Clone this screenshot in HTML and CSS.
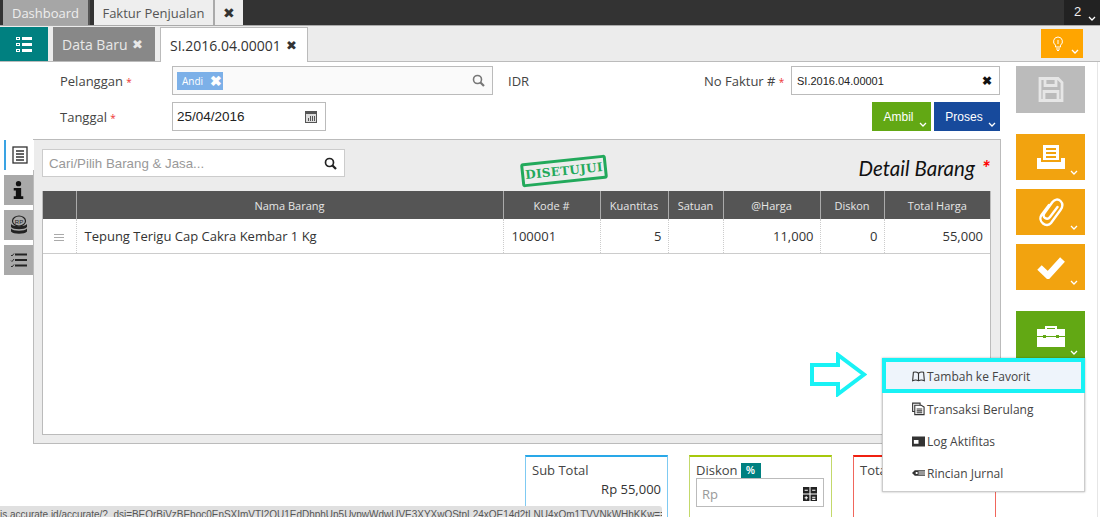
FILE: index.html
```html
<!DOCTYPE html>
<html lang="id">
<head>
<meta charset="utf-8">
<title>Faktur Penjualan</title>
<link rel="stylesheet" href="styles.css">
</head>
<body>
<div class="page">
  <header class="topbar">
    <div class="wintab wintab-off">Dashboard</div>
    <div class="wintab wintab-on">Faktur Penjualan</div>
    <div class="wintab wintab-close">✖</div>
    <div class="counter">2<svg class="chev" viewBox="0 0 8 5"><path d="M1 1l3 3 3-3"/></svg></div>
  </header>
  <nav class="subbar">
    <div class="menu-btn">
      <svg width="16" height="15" viewBox="0 0 16 15" fill="#fff"><path d="M0 0h4v3H0zM6 0h10v3H6zM0 6h4v3H0zM6 6h10v3H6zM0 12h4v3H0zM6 12h10v3H6z"/><path fill="#008080" d="M1 1h2v1H1zM1 7h2v1H1zM1 13h2v1H1z"/></svg>
    </div>
    <div class="doc-tab doc-tab-off">Data Baru <span class="x">✖</span></div>
    <div class="doc-tab doc-tab-on">SI.2016.04.00001 <span class="x">✖</span></div>
    <div class="lamp">
      <svg width="12" height="15" viewBox="0 0 12 15" fill="none" stroke="#fff" stroke-width="1"><path d="M6 1a4.500 4.500 0 0 0-2.500 8.200V11h5V9.200A4.500 4.500 0 0 0 6 1zM4 13h4M5 14.500h2M6 4v4"/></svg>
      <svg class="chev" viewBox="0 0 8 5"><path d="M1 1l3 3 3-3"/></svg>
    </div>
  </nav>
  <div class="workspace">
    <main class="main">
      <section class="form">
        <div class="form-row">
          <label class="lbl">Pelanggan <i>*</i></label>
          <div class="field field-cust">
            <span class="chip">Andi <b>✖</b></span>
            <svg class="search" width="13" height="13" viewBox="0 0 13 13" fill="none" stroke="#777" stroke-width="1.600"><circle cx="5.500" cy="5.500" r="4"/><path d="M8.500 8.500l3.500 3.500" stroke-width="2.200"/></svg>
          </div>
          <span class="cur">IDR</span>
          <label class="lbl-no">No Faktur # <i>*</i></label>
          <div class="field field-no"><span>SI.2016.04.00001</span><b class="clear">✖</b></div>
        </div>
        <div class="form-row form-row-2">
          <label class="lbl">Tanggal <i>*</i></label>
          <div class="field field-date"><span>25/04/2016</span>
            <svg width="12" height="13" viewBox="0 0 12 13"><path fill="#555" d="M0 1h12v12H0z"/><path fill="#ddd" d="M1 4h10v8H1z"/><path fill="#555" d="M5 6h1v5H5zM7 6h1v5H7zM9 6h1v5H9zM3 8h1v3H3z"/></svg>
          </div>
          <div class="actions">
            <div class="act act-green">Ambil<svg class="chev" viewBox="0 0 8 5"><path d="M1 1l3 3 3-3"/></svg></div>
            <div class="act act-blue">Proses<svg class="chev" viewBox="0 0 8 5"><path d="M1 1l3 3 3-3"/></svg></div>
          </div>
        </div>
      </section>
      <section class="detail">
        <div class="side-tabs">
          <div class="side-tab side-tab-on">
            <svg width="16" height="18" viewBox="0 0 16 18" fill="none" stroke="#333" stroke-width="1.300"><rect x="1" y="1" width="14" height="16"/><path d="M4 5h8M4 8h8M4 11h8M4 14h8"/></svg>
          </div>
          <div class="side-tab">
            <svg width="11" height="18" viewBox="0 0 10 17" fill="#111"><circle cx="5" cy="2.500" r="2.500"/><path d="M.5 6.500h7v8h2V17H.5v-2.500h2v-5.500h-2z"/></svg>
          </div>
          <div class="side-tab">
            <svg width="18" height="20" viewBox="0 0 18 20"><ellipse cx="9" cy="6" rx="6.500" ry="5" fill="none" stroke="#222" stroke-width="1.200"/><text x="4.800" y="8.500" class="rp">RP</text><path d="M1 9c2 3 14 3 16 0v3c-2 3-14 3-16 0zM1 13.500c2 3 14 3 16 0v3c-2 3-14 3-16 0z" fill="#222"/></svg>
          </div>
          <div class="side-tab">
            <svg width="17" height="14" viewBox="0 0 17 14" fill="none" stroke="#222"><path d="M5 1.500h12M5 7h12M5 12.500h12" stroke-width="2"/><path d="M1 2l1 1 2-2.500M1 7.500l1 1 2-2.500M1 13l1 1 2-2.500" stroke-width=".9"/></svg>
          </div>
        </div>
        <div class="panel">
          <div class="panel-head">
            <div class="item-search"><span>Cari/Pilih Barang &amp; Jasa...</span>
              <svg width="13" height="13" viewBox="0 0 13 13" fill="none" stroke="#222" stroke-width="1.700"><circle cx="5.500" cy="5.500" r="4"/><path d="M8.500 8.500l3.500 3.500" stroke-width="2.300"/></svg>
            </div>
            <div class="stamp">DISETUJUI</div>
            <h2 class="detail-title">Detail Barang <i>*</i></h2>
          </div>
          <div class="table-wrap">
            <table class="items">
              <thead>
                <tr><th class="c0"></th><th class="c1">Nama Barang</th><th class="c2">Kode #</th><th class="c3">Kuantitas</th><th class="c4">Satuan</th><th class="c5">@Harga</th><th class="c6">Diskon</th><th class="c7">Total Harga</th></tr>
              </thead>
              <tbody>
                <tr>
                  <td class="grip"><svg width="10" height="7" viewBox="0 0 10 7" fill="#aaa"><path d="M0 0h10v1H0zM0 3h10v1H0zM0 6h10v1H0z"/></svg></td>
                  <td class="name">Tepung Terigu Cap Cakra Kembar 1 Kg</td><td class="name">100001</td><td class="num">5</td><td></td><td class="num">11,000</td><td class="num">0</td><td class="num">55,000</td>
                </tr>
              </tbody>
            </table>
          </div>
        </div>
      </section>
      <section class="totals">
        <div class="tot tot-blue"><div class="tot-t">Sub Total</div><div class="tot-v">Rp 55,000</div></div>
        <div class="tot tot-green"><div class="tot-t">Diskon <span class="pct">%</span></div>
          <div class="disc-in"><span>Rp</span>
            <svg width="14" height="14" viewBox="0 0 13 13" fill="#222"><path d="M0 0h6v6H0zM7 0h6v6H7zM0 7h6v6H0zM7 7h6v6H7z"/><path fill="#fff" d="M1.500 2.500h3v1h-3zM8.500 2.500h3v1h-3zM8.500 9h3v1h-3zM8.500 11h3v1h-3zM2.500 8.500h1v1h1v1h-1v1h-1v-1h-1v-1h1z"/></svg>
          </div>
        </div>
        <div class="tot tot-red"><div class="tot-t">Total</div></div>
      </section>
    </main>
    <aside class="rail">
      <div class="rb rb-save">
        <svg width="26" height="27" viewBox="0 0 26 26" fill="none" stroke="#e6e6e6" stroke-width="2.800"><path d="M2 2h18l4 4v18H2z"/><path d="M7 2v7h11V2M6 24v-9h14v9"/></svg>
      </div>
      <div class="rb rb-print">
        <svg width="28" height="25" viewBox="0 0 28 25" fill="#fff"><path fill-rule="evenodd" d="M6 0h16v15H6zM9 3v2h10V3zM9 7v2h10V7zM9 11v2h10v-2z"/><path d="M0 13h4v4h20v-4h4v11H0z"/></svg>
        <svg class="chev" viewBox="0 0 8 5"><path d="M1 1l3 3 3-3"/></svg>
      </div>
      <div class="rb rb-clip">
        <svg width="26" height="29" viewBox="0 0 26 29" fill="none" stroke="#fff" stroke-width="2.400" stroke-linecap="round"><path d="M11 7L3.500 17c-2 3-1 6.500 1.500 8.500s6 2 8-.5L22.500 12c2.500-3.500 2.500-6.500 0-9s-6-1.500-8 1L6.500 15c-1.500 2-1 4 .5 5s3.500 1 5-1l7.500-10"/></svg>
        <svg class="chev" viewBox="0 0 8 5"><path d="M1 1l3 3 3-3"/></svg>
      </div>
      <div class="rb rb-check">
        <svg width="28" height="23" viewBox="0 0 28 23" fill="none" stroke="#fff" stroke-width="6.500"><path d="M2.500 11.500l8.500 8L25.500 3.500"/></svg>
        <svg class="chev" viewBox="0 0 8 5"><path d="M1 1l3 3 3-3"/></svg>
      </div>
      <div class="rb rb-tools">
        <svg width="28" height="22" viewBox="0 0 28 22"><path fill="none" stroke="#fff" stroke-width="2" d="M9 5V2h10v3"/><path fill="#fff" d="M0 4h28v18H0z"/><path fill="#62a814" d="M0 11h28v1H0zM6 10h3v3H6zM19 10h3v3h-3z"/></svg>
        <svg class="chev" viewBox="0 0 8 5"><path d="M1 1l3 3 3-3"/></svg>
      </div>
    </aside>
  </div>
  <svg class="arrow" width="57" height="45" viewBox="0 0 57 45" fill="#fff" stroke="#19f2f5" stroke-width="4"><path d="M2 13h26V3l26 19.500L28 42V32H2z"/></svg>
  <ul class="dropdown">
    <li class="dd dd-on"><svg width="13" height="11" viewBox="0 0 14 11" fill="none" stroke="#333" stroke-width="1.200"><path d="M7 2C5 .5 3 .5 1.500 1L.7 10C3 9 5 9 7 10c2-1 4-1 6.300 0L12.500 1C11 .5 9 .5 7 2zv8"/></svg>Tambah ke Favorit</li>
    <li class="dd"><svg width="13" height="14" viewBox="0 0 14 14" fill="none" stroke="#333" stroke-width="1.200"><path d="M.7.700h8v9h-8z"/><path fill="#fff" d="M3 3h7l3 2v8H3z"/><path d="M5 7h6M5 9h6M5 11h6"/></svg>Transaksi Berulang</li>
    <li class="dd"><svg width="13" height="11" viewBox="0 0 14 11" fill="#333"><path fill-rule="evenodd" d="M0 0h14v11H0zM2 4v4h5V4z"/></svg>Log Aktifitas</li>
    <li class="dd"><svg width="13" height="8" viewBox="0 0 14 8" fill="#333"><path fill-rule="evenodd" d="M3 1h11v6H3L0 4zM4 3v2h2V3z"/><path fill="#fff" d="M7 2.500h7v1H7zM7 4.500h7v1H7z"/></svg>Rincian Jurnal</li>
  </ul>
  <div class="status">is.accurate.id/accurate/?_dsi=BEQrBiVzBEboc0EnSXImVTI2QU1EdDhphUp5UvpwWdwUVE3XYXwOStpL24xOE14d2tLNU4xOm1TVVNkWHhKKw==#</div>
</div>
</body>
</html>
```
FILE: styles.css
```css
* { box-sizing: border-box; }
html, body { margin: 0; padding: 0; height: 100%; overflow: hidden; background: #fff; }
body { font-family: "Open Sans", sans-serif; font-size: 13px; color: #333; }
.page { position: relative; width: 1100px; height: 517px; overflow: hidden; display: flex; flex-direction: column; }
.chev { width: 8px; height: 5px; fill: none; stroke: #fff; stroke-width: 1.300; position: absolute; right: 4px; bottom: 4px; }

.topbar { height: 26px; flex: none; background: #333; border-bottom: 1px solid #aaa; display: flex; padding-left: 3px; gap: 0; }
.wintab { height: 25px; display: flex; align-items: center; justify-content: center; font-size: 13px; }
.wintab-off { width: 87px; background: #a6a6a6; color: #eee; border-right: 2px solid #555; }
.wintab-on { width: 121px; margin-left: 4px; background: #eee; color: #555; border-right: 2px solid #aaa; }
.wintab-close { width: 28px; background: #eee; color: #333; font-size: 14px; }
.counter { position: relative; margin-left: auto; width: 36px; height: 25px; background: #222; color: #eee; font-size: 13px; padding: 4px 0 0 10px; font-family: "Liberation Sans", sans-serif; }

.subbar { position: relative; height: 36px; flex: none; background: #ececec; border-bottom: 1px solid #bbb; display: flex; padding-top: 1px; }
.menu-btn { width: 48px; height: 34px; background: #008080; display: flex; align-items: center; justify-content: center; }
.doc-tab { height: 34px; display: flex; align-items: center; font-size: 14px; white-space: nowrap; }
.doc-tab-off { width: 102px; margin-left: 5px; background: #888; color: #e8e8e8; padding-left: 9px; gap: 5px; }
.doc-tab-on { width: 148px; height: 35px; margin-left: 5px; background: #fff; color: #333; border: 1px solid #bbb; border-bottom: 0; padding-left: 9px; gap: 5px; }
.x { font-size: 13px; }
.lamp { position: relative; margin: 2px 17px 0 auto; width: 42px; height: 29px; background: #ffa500; display: flex; align-items: center; justify-content: center; padding-right: 8px; }

.workspace { flex: 1; display: flex; min-height: 0; }
.main { width: 1009px; flex: none; }
.rail { width: 91px; padding: 4px 0 0 7px; border-right: 1px solid #e6e6e6; margin-right: 2px; display: flex; flex-direction: column; }
.rb { position: relative; width: 69px; display: flex; align-items: center; justify-content: center; }
.rb-save { height: 47px; background: #bbb; }
.rb-print { height: 46px; margin-top: 21px; background: #f2a30f; }
.rb-clip { height: 46px; margin-top: 9px; background: #f2a30f; }
.rb-check { height: 46px; margin-top: 9px; background: #f2a30f; }
.rb-tools { height: 49px; margin-top: 21px; background: #62a814; }
.rb .chev { right: 7px; bottom: 5px; }

.form { height: 77px; padding-top: 4px; }
.form-row { display: flex; align-items: center; height: 29px; font-size: 13px; color: #444; }
.form-row-2 { margin-top: 7px; }
.lbl { width: 112px; margin-left: 60px; }
.lbl i, .lbl-no i { color: #e33; font-style: normal; font-size: 10px; }
.field { height: 29px; border: 1px solid #bbb; background: #fff; display: flex; align-items: center; }
.field-cust { width: 321px; background: #fafafa; padding: 0 7px 0 4px; justify-content: space-between; }
.chip { height: 18px; width: 46px; background: #7cb0e8; color: #fff; font-size: 10px; display: flex; align-items: center; justify-content: space-between; padding: 0 1px 0 5px; }
.chip b { font-size: 14px; }
.cur { margin-left: 15px; width: 196px; font-size: 13px; }
.lbl-no { width: 87px; white-space: nowrap; }
.field-no { width: 209px; padding: 0 7px 0 5px; justify-content: space-between; font: 11px "Liberation Sans", sans-serif; color: #222; }
.clear { font-size: 12px; color: #111; }
.field-date { width: 154px; padding: 0 8px 0 4px; justify-content: space-between; font: 13.500px "Liberation Sans", sans-serif; color: #222; }
.actions { display: flex; gap: 3px; margin-left: auto; margin-right: 9px; }
.act { position: relative; height: 29px; display: flex; align-items: center; justify-content: center; color: #fff; font: 12px "Liberation Sans", sans-serif; padding-right: 6px; }
.act-green { width: 59px; background: #62a814; }
.act-blue { width: 66px; background: #174a9c; }

.detail { display: flex; padding-left: 4px; }
.side-tabs { width: 29px; flex: none; padding-top: 1px; }
.side-tab { height: 30px; width: 29px; margin-bottom: 5px; background: #a9a9a9; display: flex; align-items: center; justify-content: center; }
.side-tab-on { background: #fff; border-left: 2px solid #3aa3e3; position: relative; z-index: 1; margin-right: -1px; width: 30px; }
.rp { font: 6px "Liberation Sans", sans-serif; fill: #222; }
.panel { width: 968px; height: 305px; background: #ececec; border: 1px solid #bbb; padding: 9px 10px 8px 8px; display: flex; flex-direction: column; }
.panel-head { position: relative; height: 42px; flex: none; display: flex; align-items: flex-start; }
.item-search { width: 303px; height: 28px; background: #fff; border: 1px solid #ccc; padding: 0 7px 0 6px; display: flex; align-items: center; justify-content: space-between; color: #999; font: 13.300px "Liberation Sans", sans-serif; }
.stamp { position: absolute; left: 479px; top: 10px; width: 86px; height: 24px; border: 3px solid #22a95b; border-radius: 3px; color: #22a95b; font: bold 12px "DejaVu Serif", serif; letter-spacing: .3px; display: flex; align-items: center; justify-content: center; transform: rotate(-6deg); }
.detail-title { margin: 6px 0 0 auto; font: italic 400 20.500px "Lato", sans-serif; color: #111; }
.detail-title i { color: #f00; font-size: 21px; font-weight: 700; margin-left: 2px; }
.table-wrap { flex: 1; background: #fff; border: 1px solid #bbb; border-top: 0; margin-right: -1px; }
.items { width: 100%; border-collapse: collapse; table-layout: fixed; }
.items th { height: 28px; background: #555; color: #e6e6e6; font-size: 11px; font-weight: 400; border-left: 1px solid #aaa; padding: 0; }
.items th:first-child { border-left: 0; }
.items td { height: 34px; padding: 0 7px; font-size: 13px; color: #333; border-left: 1px dotted #ccc; border-bottom: 1px solid #ccc; white-space: nowrap; }
.items td:first-child { border-left: 0; }
.items .name { padding-left: 8px; }
.items .num { text-align: right; padding-right: 6px; }
.items .grip { text-align: center; padding: 0; }
.items .num:last-child { padding-right: 7px; }
.c0 { width: 33px; } .c1 { width: 427px; } .c2 { width: 97px; } .c3 { width: 68px; } .c4 { width: 55px; } .c5 { width: 97px; } .c6 { width: 64px; }

.totals { display: flex; gap: 21px; padding: 11px 0 0 525px; }
.tot { width: 143px; height: 70px; border: 1px solid; border-top-width: 2px; padding: 4px 6px; font-size: 13px; flex: none; }
.tot-blue { border-color: #7fcaf2; border-top-color: #29a8e8; }
.tot-green { border-color: #c3d96b; border-top-color: #a6c80c; }
.tot-red { border-color: #f0665c; border-top-color: #f02010; }
.tot-t { color: #444; display: flex; align-items: center; gap: 3px; height: 18px; }
.tot-v { text-align: right; margin-top: 1px; }
.pct { background: #008080; color: #fff; font: bold 10px "Liberation Sans", sans-serif; width: 20px; height: 15px; display: flex; align-items: center; justify-content: center; }
.disc-in { width: 128px; height: 29px; border: 1px solid #bbb; margin-top: -1px; display: flex; align-items: center; justify-content: space-between; padding: 2px 6px 0 5px; color: #999; }

.arrow { position: absolute; left: 810px; top: 352px; }
.dropdown { position: absolute; left: 882px; top: 358px; width: 203px; height: 134px; margin: 0; padding: 0; list-style: none; background: #fff; border: 1px solid #ccc; box-shadow: 0 0 2px rgba(0,0,0,.3); }
.dd { height: 32px; display: flex; align-items: center; gap: 2px; padding-left: 29px; font-size: 12px; color: #444; white-space: nowrap; }
.dd svg { flex: none; }
.dd-on { height: 35px; margin: -1px -1px 0; padding: 2px 0 0 26px; background: #eef4fb; border: 4px solid #19f2f5; }
.status { position: absolute; left: 0; bottom: 0; width: 662px; height: 11px; background: #e0e0e0; border-radius: 0 3px 0 0; font: 10px/17px "Liberation Sans", sans-serif; letter-spacing: -.02px; color: #555; overflow: hidden; white-space: nowrap; }
```
